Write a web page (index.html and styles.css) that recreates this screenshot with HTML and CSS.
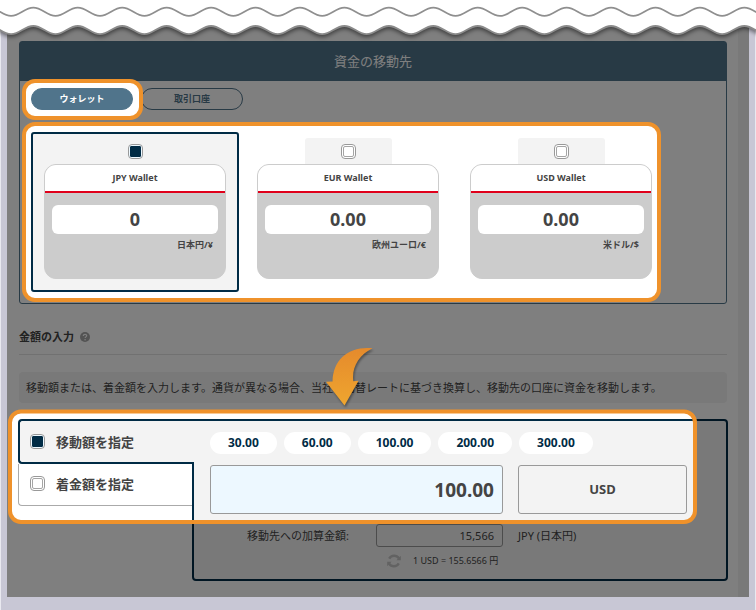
FILE: index.html
```html
<!DOCTYPE html>
<html lang="ja">
<head>
<meta charset="utf-8">
<meta name="viewport" content="width=device-width, initial-scale=1">
<title>資金の移動先</title>
<link rel="stylesheet" href="styles.css">
</head>
<body>
<div class="stage">
  <div class="screen">
    <main class="content">
      <section class="panel">
        <h1 class="panel-title">資金の移動先</h1>
        <div class="panel-body">
          <nav class="tabs">
            <button type="button" class="pill pill-active">ウォレット</button>
            <button type="button" class="pill">取引口座</button>
          </nav>
          <div class="wallets">
            <label class="wallet wallet-selected">
              <span class="pick"><input class="check" type="radio" name="wallet" checked></span>
              <span class="card">
                <span class="card-name">JPY Wallet</span>
                <span class="card-body">
                  <span class="balance">0</span>
                  <span class="unit">日本円/¥</span>
                </span>
              </span>
            </label>
            <label class="wallet">
              <span class="pick"><input class="check" type="radio" name="wallet"></span>
              <span class="card">
                <span class="card-name">EUR Wallet</span>
                <span class="card-body">
                  <span class="balance">0.00</span>
                  <span class="unit">欧州ユーロ/€</span>
                </span>
              </span>
            </label>
            <label class="wallet">
              <span class="pick"><input class="check" type="radio" name="wallet"></span>
              <span class="card">
                <span class="card-name">USD Wallet</span>
                <span class="card-body">
                  <span class="balance">0.00</span>
                  <span class="unit">米ドル/$</span>
                </span>
              </span>
            </label>
          </div>
        </div>
      </section>

      <h2 class="section-title">金額の入力
        <svg class="help" viewBox="0 0 10 10" aria-hidden="true">
          <circle cx="5" cy="5" r="5" fill="#a6a6a6"/>
          <path d="M3.3 3.9C3.3 1.7 6.8 1.8 6.7 3.8 6.6 4.9 5.1 4.9 5.1 6.1" fill="none" stroke="#fff" stroke-width="1.2"/>
          <circle cx="5.1" cy="7.7" r=".8" fill="#fff"/>
        </svg>
      </h2>
      <p class="notice">移動額または、着金額を入力します。通貨が異なる場合、当社の為替レートに基づき換算し、移動先の口座に資金を移動します。</p>

      <form class="amount">
        <div class="modes">
          <label class="mode mode-selected"><input class="check" type="radio" name="mode" checked>移動額を指定</label>
          <label class="mode"><input class="check" type="radio" name="mode">着金額を指定</label>
        </div>
        <div class="amount-panel">
          <div class="chips">
            <button type="button" class="chip">30.00</button>
            <button type="button" class="chip">60.00</button>
            <button type="button" class="chip">100.00</button>
            <button type="button" class="chip">200.00</button>
            <button type="button" class="chip">300.00</button>
          </div>
          <div class="fields">
            <input class="field amount-input" type="text" value="100.00" aria-label="移動額">
            <div class="field currency">USD</div>
            <div class="credit">
              <label for="credit">移動先への加算金額:</label>
              <input class="field credit-input" id="credit" type="text" value="15,566" readonly>
            </div>
            <span class="credit-currency">JPY (日本円)</span>
          </div>
          <div class="rate">
            <svg class="refresh" viewBox="0 0 14 14" aria-hidden="true">
              <g fill="none" stroke="#c4c4c4" stroke-width="2.4">
                <path d="M2.200 4.600A5.600 5.600 0 0 1 11.900 4.400"/>
                <path d="M11.800 9.400A5.600 5.600 0 0 1 2.100 9.600"/>
              </g>
              <path d="M13.800 1.800V6.200H9.400ZM.2 12.200V7.800H4.600Z" fill="#c4c4c4"/>
            </svg>
            <span>1 USD = 155.6566 円</span>
          </div>
        </div>
      </form>
    </main>
    <div class="gutter"></div>

    <svg class="guide" aria-hidden="true">
      <defs>
        <mask id="spots">
          <rect width="100%" height="100%" fill="#fff"/>
          <rect x="17" y="81" width="117" height="37" rx="11"/>
          <rect x="17" y="124" width="635" height="176" rx="11"/>
          <rect x="3" y="411.5" width="685" height="110.5" rx="11"/>
        </mask>
        <linearGradient id="arrow" x1="0" y1="0" x2="0" y2="1">
          <stop offset="0" stop-color="#e58a2c"/>
          <stop offset="1" stop-color="#efa62f"/>
        </linearGradient>
      </defs>
      <rect width="100%" height="100%" fill="#000" fill-opacity=".5" mask="url(#spots)"/>
      <g fill="none" stroke="#ef922b" stroke-width="4">
        <rect x="17" y="81" width="117" height="37" rx="11"/>
        <rect x="17" y="124" width="635" height="176" rx="11"/>
        <rect x="3" y="411.5" width="685" height="110.5" rx="11"/>
      </g>
      <path class="arrow" fill="url(#arrow)" d="M365.500 348.200C343 346 326 358 325.500 381.500L319 381.700 337.500 405.500 351.500 380.800 346.300 381.300C344.500 367 352 355 365.500 348.200Z"/>
    </svg>
  </div>

  <svg class="torn" aria-hidden="true">
    <defs>
      <path id="wave" d="M-11.1 0c9 0 13.200 8.200 22.200 8.200s13.200-8.200 22.240-8.200s13.200 8.200 22.200 8.200s13.200-8.200 22.240-8.200s13.200 8.200 22.200 8.200s13.200-8.200 22.240-8.200s13.200 8.200 22.200 8.200s13.200-8.200 22.240-8.200s13.200 8.200 22.200 8.200s13.200-8.200 22.240-8.200s13.200 8.200 22.200 8.200s13.200-8.200 22.240-8.200s13.200 8.200 22.200 8.200s13.200-8.200 22.240-8.200s13.200 8.200 22.200 8.200s13.200-8.200 22.240-8.200s13.200 8.200 22.200 8.200s13.200-8.200 22.240-8.200s13.200 8.200 22.200 8.200s13.200-8.200 22.240-8.200s13.200 8.200 22.200 8.200s13.200-8.200 22.240-8.200s13.200 8.200 22.200 8.200s13.200-8.200 22.240-8.200s13.200 8.200 22.200 8.200s13.200-8.200 22.240-8.200s13.200 8.200 22.200 8.200s13.200-8.200 22.240-8.200s13.200 8.200 22.200 8.200s13.200-8.200 22.240-8.200s13.200 8.200 22.200 8.200s13.200-8.200 22.240-8.200s13.200 8.200 22.200 8.200s13.200-8.200 22.240-8.200s13.200 8.200 22.200 8.200s13.200-8.200 22.240-8.200"/>
    </defs>
    <g class="torn-edge">
      <rect width="100%" height="26" fill="#fff"/>
      <use href="#wave" y="26" fill="#fff" stroke="#8b8b8b" stroke-width="1.800"/>
    </g>
    <rect width="100%" height="25" fill="#fff"/>
    <use href="#wave" y="7.700" fill="none" stroke="#8f8f8f" stroke-width="1.700"/>
  </svg>
</div>
</body>
</html>
```
FILE: styles.css
```css
* { box-sizing: border-box; }

body {
  margin: 0;
  background: #c8c7d5;
  color: #444;
  font-family: "Noto Sans", "Noto Sans CJK JP", sans-serif;
  font-size: 11px;
  line-height: 16px;
}

button, input {
  margin: 0;
  color: inherit;
  font: inherit;
}

.stage {
  position: relative;
  padding: 0 6px 13px;
  border-left: 1px solid #e9e9f0;
  border-right: 1px solid #e9e9f0;
}

.screen {
  position: relative;
  display: flex;
  background: #fff;
}

.content {
  flex: 1;
  min-width: 0;
  padding: 41px 11px 16px 12px;
}

.gutter {
  width: 11px;
  background: #f3f3f3;
}

/* Destination panel */
.panel {
  border: 1px solid #50748b;
  border-radius: 3px;
}

.panel-title {
  margin: 0;
  background: #50748b;
  color: #fff;
  font-size: 13px;
  font-weight: 400;
  line-height: 39px;
  text-align: center;
}

.panel-body { padding: 7px 61px 11px 11px; }

.tabs {
  display: flex;
  gap: 8px;
  margin-bottom: 22px;
}

.pill {
  width: 102px;
  height: 22px;
  padding: 0;
  border: 1px solid #50748b;
  border-radius: 11px;
  background: #fff;
  color: #50748b;
  font-size: 9px;
  font-weight: 700;
}

.pill-active {
  background: #50748b;
  color: #fff;
}

.wallets {
  display: grid;
  grid-template-columns: repeat(3, minmax(0, 1fr));
  gap: 5px;
}

.wallet {
  padding: 4px 11px 11px;
  border: 2px solid transparent;
  border-radius: 3px;
}

.wallet-selected {
  border-color: #002b45;
  background: #f3f3f3;
}

.pick {
  display: flex;
  align-items: center;
  justify-content: center;
  width: 87px;
  height: 26px;
  margin: 0 auto;
  border-radius: 3px 3px 0 0;
  background: #f3f3f3;
}

.check {
  display: grid;
  place-items: center;
  flex: none;
  width: 15px;
  height: 15px;
  border: 1px solid #999;
  border-radius: 4px;
  background: #fff;
  appearance: none;
}

.check::before {
  width: 9px;
  height: 9px;
  border: 1px solid #a5a5a5;
  border-radius: 2px;
  content: "";
}

.check:checked { background: #edf8ff; }

.check:checked::before {
  border-color: #002b45;
  border-radius: 1px;
  background: #002b45;
}

.card {
  display: block;
  overflow: hidden;
  border: 1px solid #ccc;
  border-radius: 12px;
  background: #ccc;
  font-weight: 700;
}

.card-name {
  display: block;
  border-bottom: 2px solid #e0001b;
  background: #fff;
  font-size: 9px;
  line-height: 26px;
  text-align: center;
}

.card-body {
  display: block;
  height: 85px;
  padding: 12px 7px;
}

.balance {
  display: block;
  border-radius: 6px;
  background: #fff;
  font-size: 18px;
  line-height: 29px;
  text-align: center;
}

.unit {
  display: block;
  padding: 3px 5px;
  font-size: 9px;
  text-align: right;
}

/* Amount section */
.section-title {
  display: flex;
  align-items: center;
  gap: 6px;
  margin: 24px 0 17px;
  padding-bottom: 9px;
  border-bottom: 1px solid #e3e3e3;
  font-size: 11px;
  line-height: 17px;
}

.help {
  width: 10px;
  height: 10px;
}

.notice {
  margin: 0 0 16px;
  padding: 0 7px;
  border-radius: 4px;
  background: #f3f3f3;
  line-height: 31px;
}

.amount {
  display: flex;
  margin: 0 -1px;
}

.modes {
  z-index: 1;
  flex: none;
  width: 176px;
  margin-right: -2px;
}

.mode {
  display: flex;
  align-items: center;
  gap: 11px;
  height: 42px;
  margin-right: 2px;
  padding-bottom: 2px;
  padding-left: 11px;
  border: solid #aaa;
  border-width: 0 0 1px 1px;
  border-radius: 0 0 0 4px;
  font-size: 13px;
  font-weight: 700;
}

.mode-selected {
  height: 45px;
  margin-right: 0;
  padding-bottom: 0;
  padding-left: 10px;
  border: solid #002b45;
  border-width: 2px 0 2px 2px;
  border-radius: 4px 0 0 4px;
  background: #f3f3f3;
}

.amount-panel {
  flex: 1;
  min-width: 0;
  padding: 11px 39px 10px 16px;
  border: 2px solid #002b45;
  border-radius: 0 4px 4px 4px;
  background: #f3f3f3;
}

.chips {
  display: flex;
  gap: 7px;
  margin-bottom: 11px;
}

.chip {
  height: 22px;
  padding: 0 18px;
  border: 0;
  border-radius: 11px;
  background: #fff;
  color: #002b45;
  font-size: 12px;
  font-weight: 700;
}

.fields {
  display: grid;
  grid-template-columns: 293fr 169fr;
  gap: 10px 15px;
}

.field {
  min-width: 0;
  border: 1px solid #999;
  border-radius: 3px;
}

.amount-input {
  height: 49px;
  padding: 0 8px;
  background: #edf8ff;
  font-size: 19px;
  font-weight: 700;
  text-align: right;
}

.currency {
  font-size: 13px;
  font-weight: 700;
  line-height: 47px;
  text-align: center;
}

.credit {
  display: flex;
  align-items: center;
  justify-content: flex-end;
  gap: 27px;
}

.credit-input {
  width: 127px;
  height: 23px;
  padding: 0 8px;
  background: transparent;
  text-align: right;
}

.credit-currency { align-self: center; }

.rate {
  display: flex;
  align-items: center;
  gap: 12px;
  margin-top: 6px;
  padding-left: 177px;
  font-size: 9px;
}

.refresh {
  width: 14px;
  height: 14px;
}

/* Dimming layer with highlighted areas */
.guide {
  position: absolute;
  inset: 0;
  z-index: 2;
  width: 100%;
  height: 100%;
  pointer-events: none;
}

.arrow { filter: drop-shadow(1px 2px 1px rgba(0, 0, 0, .35)); }

/* Torn paper edge */
.torn {
  position: absolute;
  top: 0;
  left: -1px;
  z-index: 3;
  width: calc(100% + 2px);
  height: 44px;
  pointer-events: none;
}

.torn-edge { filter: drop-shadow(0 2px 2px rgba(0, 0, 0, .5)); }
```
